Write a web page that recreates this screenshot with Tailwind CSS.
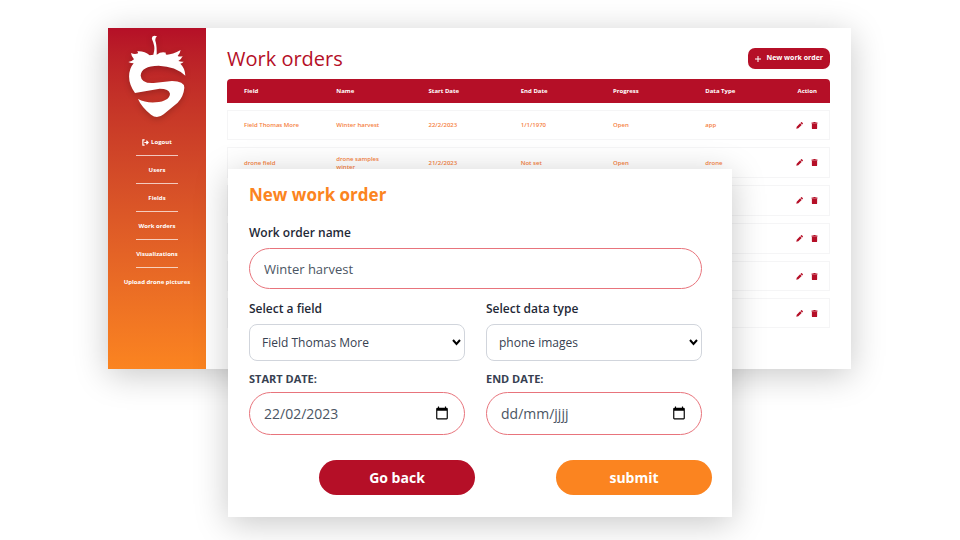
<!DOCTYPE html>
<html lang="en">
<head>
    <meta charset="UTF-8">
    <meta name="viewport" content="width=device-width, initial-scale=1.0">
    <title>Work orders</title>
    <script src="https://cdn.jsdelivr.net/npm/@tailwindcss/browser@4"></script>
</head>
<body class="bg-white min-h-screen overflow-hidden font-['Open_Sans','Noto_Sans',sans-serif]">
    <!-- Icons -->
    <svg class="hidden">
        <symbol id="pencil" viewBox="0 0 24 24">
            <path d="M1 23l1.500-7L14 4.500l5.500 5.500L8 21.500zM15.500 3l2-2a2 2 0 0 1 3 0l2.500 2.500a2 2 0 0 1 0 3l-2 2z"/>
        </symbol>
        <symbol id="trash" viewBox="0 0 24 24">
            <path d="M2 2h6l1-2h6l1 2h6v4H2zM3 7h18v14a3 3 0 0 1-3 3H6a3 3 0 0 1-3-3z"/>
        </symbol>
        <symbol id="calendar" viewBox="0 0 24 24">
            <path d="M20 3h-1V1h-2v2H7V1H5v2H4a2 2 0 0 0-2 2v16a2 2 0 0 0 2 2h16a2 2 0 0 0 2-2V5a2 2 0 0 0-2-2zm0 18H4V8h16z"/>
        </symbol>
    </svg>

    <div class="relative w-full max-w-[960px] mx-auto pt-7 pl-27 pr-[109px]">
        <!-- Dashboard -->
        <div class="flex min-h-[341px] bg-white shadow-[0_6px_32px_rgba(0,0,0,0.22)]">
            <aside class="w-[98px] shrink-0 flex flex-col items-center pt-[6px] bg-linear-to-b from-[#b50f27] to-[#fb8420]">
                <svg class="w-[60px] h-[85px] fill-white drop-shadow-[0_2px_3px_rgba(0,0,0,0.2)]" viewBox="20 10 180 255" role="img" aria-label="Strawberry logo">
                    <path d="M24 94Q35 92 41 86Q33 77 32 67Q43 72 53 68Q54 65 50 62Q72 60 88 74L99 72Q104 56 101 44Q99 34 95 26Q93 16 102 15L110 17Q104 22 105 30Q110 44 109 72Q122 62 137 66Q134 71 140 72Q156 72 181 58Q179 69 172 76Q179 79 187 76Q183 86 174 91Q182 94 190 93Q186 98 180 99Q194 112 195 135Q166 107 115 105Q62 106 61 135Q63 159 100 157L155 151Q192 151 192 171Q190 197 172 216L130 251Q110 267 92 252Q64 230 53 205Q75 217 106 215Q148 211 149 189Q146 174 118 174L44 187Q18 150 30 115Q33 106 40 98Q32 98 24 94z"/>
                </svg>
                <nav class="w-full mt-[15px] flex flex-col items-center text-[6px] leading-[17px] font-bold text-white">
                    <a href="#" class="flex items-center gap-[2px]">
                        <svg class="size-[7px] fill-none stroke-white" viewBox="0 0 24 24" stroke-width="4">
                            <path d="M9 3H3v18h6M8 12h12M15 6l6 6-6 6"/>
                        </svg>
                        Logout
                    </a>
                    <hr class="w-[42px] mt-1 mb-[6px] border-white/70">
                    <a href="#">Users</a>
                    <hr class="w-[42px] mt-1 mb-[6px] border-white/70">
                    <a href="#">Fields</a>
                    <hr class="w-[42px] mt-1 mb-[6px] border-white/70">
                    <a href="#">Work orders</a>
                    <hr class="w-[42px] mt-1 mb-[6px] border-white/70">
                    <a href="#">Visualizations</a>
                    <hr class="w-[42px] mt-1 mb-[6px] border-white/70">
                    <a href="#">Upload drone pictures</a>
                </nav>
            </aside>

            <main class="flex-1 pl-[21px] pr-[21px] pt-[17px]">
                <div class="flex items-center justify-between">
                    <h1 class="text-[20px] leading-[27px] text-[#b50f27] font-normal">Work orders</h1>
                    <button type="button" class="h-[21px] w-[82px] flex items-center justify-between px-[7px] rounded-[7px] bg-[#b50f27] text-white text-[7px] font-bold whitespace-nowrap">
                        <svg class="size-[6px] stroke-white" viewBox="0 0 12 12" stroke-width="2"><path d="M6 0v12M0 6h12"/></svg>
                        New work order
                    </button>
                </div>
                <table class="w-full table-fixed border-separate border-spacing-x-0 border-spacing-y-[7px] text-left text-[6px] leading-[8px] text-[#f58142] font-semibold">
                    <colgroup>
                        <col class="w-[15.3%]"><col class="w-[15.3%]"><col class="w-[15.3%]"><col class="w-[15.3%]"><col class="w-[15.3%]"><col class="w-[15.3%]"><col>
                    </colgroup>
                    <thead>
                        <tr class="h-6 bg-[#b50f27] text-white [&>th]:pl-[17px] [&>th]:font-bold">
                            <th class="rounded-tl-[4px]">Field</th>
                            <th>Name</th>
                            <th>Start Date</th>
                            <th>End Date</th>
                            <th>Progress</th>
                            <th>Data Type</th>
                            <th class="rounded-tr-[4px]">Action</th>
                        </tr>
                    </thead>
                    <tbody id="orders"></tbody>
                </table>
            </main>
        </div>

        <!-- New work order dialog -->
        <form class="absolute top-[169px] left-[228px] right-[228px] h-[348px] pl-[21px] pr-5 pt-[13px] bg-white text-[#1f2937] shadow-[0_6px_32px_rgba(0,0,0,0.22)]">
            <h2 class="text-[17px] leading-[26px] font-bold text-[#fb8420]">New work order</h2>

            <div class="mt-4 pr-[10px]">
                <label for="name" class="block text-[12px] leading-[18px] font-semibold">Work order name</label>
                <input id="name" type="text" value="Winter harvest" class="mt-[6px] block w-full h-[41px] px-[14px] rounded-full border border-[#e8747c] text-[13px] text-[#4b5563]">
            </div>

            <div class="mt-[11px] pr-[10px] grid grid-cols-2 gap-x-[21px]">
                <div>
                    <label for="field" class="block text-[12px] leading-[18px] font-semibold">Select a field</label>
                    <div class="relative mt-[6px]">
                        <select id="field" class="block appearance-none w-full h-[37px] px-3 rounded-lg border border-gray-300 bg-white text-[12px] text-[#374151]">
                            <option>Field Thomas More</option>
                        </select>
                        <svg class="absolute right-1 top-[15px] w-[9px] h-[7px] fill-none stroke-black pointer-events-none" viewBox="0 0 9 7" stroke-width="2"><path d="M1 1l3.500 4L8 1"/></svg>
                    </div>
                </div>
                <div>
                    <label for="type" class="block text-[12px] leading-[18px] font-semibold">Select data type</label>
                    <div class="relative mt-[6px]">
                        <select id="type" class="block appearance-none w-full h-[37px] px-3 rounded-lg border border-gray-300 bg-white text-[12px] text-[#374151]">
                            <option>phone images</option>
                        </select>
                        <svg class="absolute right-1 top-[15px] w-[9px] h-[7px] fill-none stroke-black pointer-events-none" viewBox="0 0 9 7" stroke-width="2"><path d="M1 1l3.500 4L8 1"/></svg>
                    </div>
                </div>
                <div class="mt-[10px]">
                    <label for="start" class="block text-[11px] leading-4 font-bold text-[#374151]">START DATE:</label>
                    <div class="relative mt-[5px]">
                        <input id="start" type="text" value="22/02/2023" class="block w-full h-[43px] px-[14px] rounded-full border border-[#e8747c] text-[14px] text-[#4b5563]">
                        <button type="button" aria-label="Pick start date" class="absolute right-4 top-[14px]">
                            <svg class="size-[14px] fill-black"><use href="#calendar"/></svg>
                        </button>
                    </div>
                </div>
                <div class="mt-[10px]">
                    <label for="end" class="block text-[11px] leading-4 font-bold text-[#374151]">END DATE:</label>
                    <div class="relative mt-[5px]">
                        <input id="end" type="text" placeholder="dd/mm/jjjj" class="block w-full h-[43px] px-[14px] rounded-full border border-[#e8747c] text-[14px] text-[#4b5563] placeholder:text-[#4b5563]">
                        <button type="button" aria-label="Pick end date" class="absolute right-4 top-[14px]">
                            <svg class="size-[14px] fill-black"><use href="#calendar"/></svg>
                        </button>
                    </div>
                </div>
            </div>

            <div class="mt-[25px] flex justify-end gap-[81px] text-[14px] font-bold text-white">
                <button type="button" class="w-[156px] h-[35px] rounded-full bg-[#b50f27]">Go back</button>
                <button type="submit" class="w-[156px] h-[35px] rounded-full bg-[#fb8420]">submit</button>
            </div>
        </form>
    </div>

    <script>
        const orders = [
            { cells: ['Field Thomas More', 'Winter harvest', '22/2/2023', '1/1/1970', 'Open', 'app'], height: 30 },
            { cells: ['drone field', 'drone samples winter', '21/2/2023', 'Not set', 'Open', 'drone'], height: 31 },
            { cells: ['', '', '', '', '', ''], height: 31 },
            { cells: ['', '', '', '', '', ''], height: 31 },
            { cells: ['', '', '', '', '', ''], height: 30 },
            { cells: ['', '', '', '', '', ''], height: 30 }
        ];

        const cellClass = 'pl-[17px] pr-4 border-y border-[#f5f5f6] first:border-l first:pl-4 first:pr-0';

        document.getElementById('orders').innerHTML = orders.map(order => `
            <tr style="height: ${order.height}px">
                ${order.cells.map(text => `<td class="${cellClass}">${text}</td>`).join('')}
                <td class="pl-[15px] border-y border-r border-[#f5f5f6]">
                    <div class="flex items-center gap-2 text-[#b50f27]">
                        <button type="button" aria-label="Edit"><svg class="size-[7px] fill-current"><use href="#pencil"/></svg></button>
                        <button type="button" aria-label="Delete"><svg class="size-[7px] fill-current"><use href="#trash"/></svg></button>
                    </div>
                </td>
            </tr>`).join('');
    </script>
</body>
</html>
